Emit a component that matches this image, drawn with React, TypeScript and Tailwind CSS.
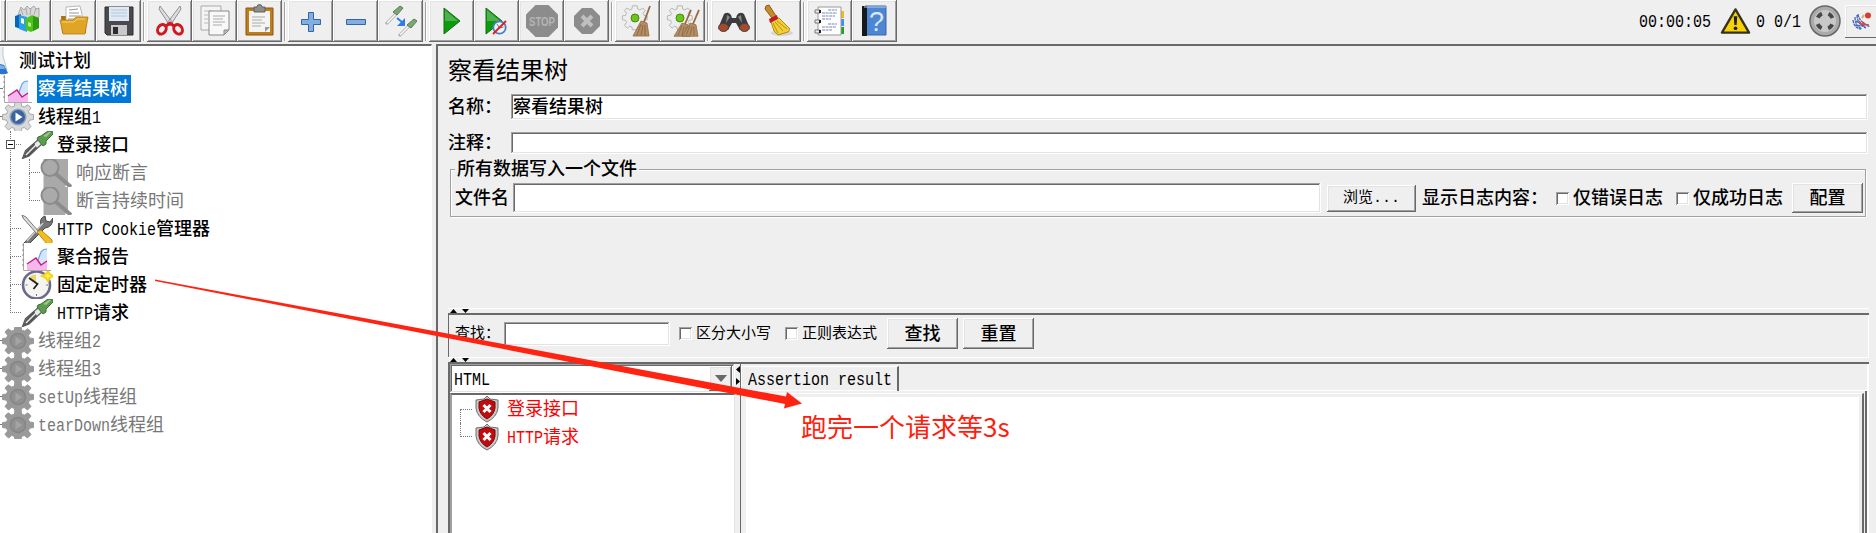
import React from "react";

const RAISED =
  "bg-[#efefef] shadow-[inset_-1px_-1px_0_#696969,inset_1px_1px_0_#fff,inset_-2px_-2px_0_#a0a0a0,inset_2px_2px_0_#e3e3e3]";
const SUNKEN =
  "bg-white shadow-[inset_-1px_-1px_0_#fff,inset_1px_1px_0_#a0a0a0,inset_-2px_-2px_0_#e3e3e3,inset_2px_2px_0_#696969]";

// Half-width characters take exactly half of a Chinese one
const Label: React.FC<{ text: string; className?: string }> = ({ text, className = "" }) => (
  <span className={`whitespace-pre text-[18px] leading-7 ${className}`}>
    {text.split(/([ -~]+)/).map((part, i) =>
      i % 2 ? (
        <span
          key={i}
          className="inline-block origin-[50%_78%] scale-y-[1.26] font-['Liberation_Mono',monospace] text-[15px] leading-4"
        >
          {part}
        </span>
      ) : (
        part
      )
    )}
  </span>
);

/* ---------- toolbar icons ---------- */

const Svg: React.FC<{ children: React.ReactNode }> = ({ children }) => (
  <svg viewBox="0 0 32 32" className="block size-8 shrink-0 overflow-visible">
    {children}
  </svg>
);

const Templates = () => (
  <Svg>
    <path d="M5 10 8 2l3 3 3-4 3 3 4-3 2 3 3-1v9L15 14z" fill="#d8d8d8" stroke="#999" strokeWidth=".8" />
    <path d="M8 4l2 6M13 3l1 7M18 3l-1 7M23 3l-2 7" stroke="#aaa" />
    <path d="M2 11l6-2v15l-6-2z" fill="#0a66b8" />
    <path d="M6 10l8 2v15l-8-3z" fill="#2ba0ea" />
    <path d="M8 13l3 1v5l-3-1z" fill="#fff" />
    <path d="M12 14l7-4 7 3v10l-8 4-5-2z" fill="#4fc21b" />
    <path d="M20 11l6 2v10l-6 3z" fill="#2d9a10" />
    <path d="M15 17l3 1v4l-3-1z" fill="#b5f08e" />
  </Svg>
);

const Open = () => (
  <Svg>
    <path d="M3 11h9l2 3h14v14H4z" fill="#a87212" />
    <path d="M8 2l14-1 4 17H8z" fill="#fff" stroke="#aaa" strokeWidth=".8" />
    <path d="M11 5l9-1M11 8h10M11 11h12M10 14h13" stroke="#999" />
    <path d="M2 15h13l3-3h12l-3 17H5z" fill="#e0a526" stroke="#b57b10" strokeWidth=".8" />
    <path d="M4 17h12l3-3h8" stroke="#f6d270" fill="none" />
  </Svg>
);

const Save = () => (
  <Svg>
    <path d="M2 2h28v28H4l-2-2z" fill="#4a4a4e" stroke="#2c2c30" />
    <path d="M6 2h20v14H6z" fill="#dfe9f3" />
    <path d="M8 5h16M8 8h16M8 11h16" stroke="#b4c8dc" />
    <path d="M8 20h16v10H8z" fill="#c8c8c8" />
    <path d="M10 22h5v7h-5z" fill="#2c2c30" />
  </Svg>
);

const Cut = () => (
  <Svg>
    <path d="M6 1l13 17-3 3L5 4zM26 1L13 18l3 3L27 4z" fill="#ddd" stroke="#888" strokeWidth=".9" />
    <ellipse cx="7.500" cy="24.500" rx="4" ry="5" transform="rotate(35 8 25)" fill="none" stroke="#d01820" strokeWidth="3" />
    <ellipse cx="24.500" cy="24.500" rx="4" ry="5" transform="rotate(-35 24 25)" fill="none" stroke="#d01820" strokeWidth="3" />
    <path d="M12 21l4-3 4 3" stroke="#d01820" strokeWidth="3" fill="none" />
  </Svg>
);

const Copy = () => (
  <Svg>
    <path d="M2 1h20v24H2z" fill="#f4f4f4" stroke="#aaa" />
    <path d="M5 6h8M5 10h4M5 14h4M5 18h4" stroke="#bbb" />
    <path d="M10 6h20v19l-5 5H10z" fill="#f8f8f8" stroke="#888" />
    <path d="M14 11h12M14 14h10M14 17h12M14 20h9" stroke="#aaa" />
    <path d="M30 25h-5v5z" fill="#bbb" stroke="#888" />
  </Svg>
);

const Paste = () => (
  <Svg>
    <path d="M2 3h27v27H2z" fill="#c07d1c" stroke="#8a5510" />
    <path d="M5 6h21v21H5z" fill="#f4f4f2" />
    <path d="M10 2h3a2 2 0 0 1 5 0h3v5H10z" fill="#8c8f89" stroke="#60635e" />
    <path d="M8 12h13M8 15h10M8 18h13M8 21h9" stroke="#aaa" />
    <path d="M26 22h-5v5z" fill="#999" />
  </Svg>
);

const Plus = () => (
  <Svg>
    <path d="M13.500 7.500h5v7h7v5h-7v7h-5v-7h-7v-5h7z" fill="#83aee0" stroke="#3465a4" />
  </Svg>
);

const Minus = () => (
  <Svg>
    <path d="M6.500 14.500h19v5h-19z" fill="#83aee0" stroke="#3465a4" />
  </Svg>
);

const Toggle = () => (
  <Svg>
    <path d="M1 19l10-10" stroke="#aaa" strokeWidth="3" />
    <path d="M2 18l9-9" stroke="#fff" strokeWidth="1.500" />
    <path d="M8 7l7-6 3 2-6 7z" fill="#7ba774" stroke="#567f4f" />
    <path d="M12 13l6 5" stroke="#2f7ee8" strokeWidth="2" />
    <path d="M20 13v8h-8z" fill="#2f7ee8" />
    <path d="M14 31l10-10" stroke="#aaa" strokeWidth="3" />
    <path d="M15 30l9-9" stroke="#fff" strokeWidth="1.500" />
    <path d="M22 20l7-6 3 2-6 7z" fill="#7ba774" stroke="#567f4f" />
  </Svg>
);

const Play = () => (
  <Svg>
    <path d="M8 3l16 13L8 29z" fill="#0a9d0a" stroke="#176b17" />
    <path d="M9 5l13 11H9z" fill="#4eb04e" />
  </Svg>
);

const PlayNoTimers = () => (
  <Svg>
    <path d="M5 3l16 13L5 29z" fill="#0a9d0a" stroke="#176b17" />
    <path d="M6 5l13 11H6z" fill="#4eb04e" />
    <circle cx="18.500" cy="22.500" r="6.200" fill="#eef4fb" stroke="#4a7fc0" strokeWidth="1.800" />
    <path d="M16 19l2.500 4 4-1" stroke="#777" fill="none" />
    <path d="M12 29L25 16" stroke="#e01b24" strokeWidth="1.800" />
  </Svg>
);

const Stop = () => (
  <Svg>
    <path d="M9.500 0h13L32 9.500v13L22.500 32h-13L0 22.500v-13z" fill="#8c8c8c" />
    <text x="16" y="20.500" textAnchor="middle" fontSize="12" fontWeight="bold" textLength="26" lengthAdjust="spacingAndGlyphs" fill="#b5b5b5" fontFamily="Liberation Sans">
      STOP
    </text>
  </Svg>
);

const Shutdown = () => (
  <Svg>
    <path d="M11 3h10l8 8v10l-8 8H11l-8-8V11z" fill="#8c8c8c" />
    <path d="M11 11l10 10M21 11L11 21" stroke="#bfbfbf" strokeWidth="4" />
  </Svg>
);

const GearShape: React.FC<{ fill: string; stroke: string }> = ({ fill, stroke }) => (
  <path
    d="M13 1h6l.6 4 2.700 1.100L26 3.800 29 7l-2.600 3.300 1.100 2.700 4 .5v5l-4 .7-1.100 2.700L29 25.500 25.500 29l-3.300-2.600-2.700 1.100L19 31h-6l-.6-3.500-2.700-1.100L6.500 29 3 25.500l2.600-3.600-1.100-2.700-4-.7v-5l4-.5 1.100-2.700L3 7l3-3.200 3.700 2.300L12.400 5z"
    fill={fill}
    stroke={stroke}
  />
);

const Broom: React.FC<{ x: number }> = ({ x }) => (
  <g transform={`translate(${x} 0)`}>
    <path d="M17 1l-6 16" stroke="#9a6a42" strokeWidth="1.800" />
    <path d="M8 16l6 2 2 13H0z" fill="#b58e66" stroke="#8d6843" strokeWidth=".8" />
    <path d="M8 19L4 30M10 20L8 30M12 20v10" stroke="#7c5836" strokeWidth=".7" />
  </g>
);

const Clear = () => (
  <Svg>
    <g transform="scale(.8)">
      <GearShape fill="#eee" stroke="#aaa" />
    </g>
    <circle cx="13" cy="13" r="4" fill="#6cc518" stroke="#468a12" />
    <Broom x={11} />
  </Svg>
);

const ClearAll = () => (
  <Svg>
    <g transform="scale(.8)">
      <GearShape fill="#eee" stroke="#aaa" />
    </g>
    <circle cx="13" cy="13" r="4" fill="#6cc518" stroke="#468a12" />
    <g transform="translate(0 4) scale(1 .88)">
      <Broom x={7} />
      <Broom x={15} />
    </g>
  </Svg>
);

const Search = () => (
  <Svg>
    <path d="M6 9q4-3 7 1l1 3h4l1-3q3-4 7-1l5 12-2 4h-7l-4-7h-4l-4 7H3l-2-4z" fill="#3c3c3e" />
    <path d="M9 10l3 2-4 6zM23 10l-3 2 4 6z" fill="#888" />
    <ellipse cx="5.500" cy="22.500" rx="5" ry="4" fill="#a8492a" stroke="#444" />
    <ellipse cx="26.500" cy="22.500" rx="5" ry="4" fill="#a8492a" stroke="#444" />
  </Svg>
);

const Sweep = () => (
  <Svg>
    <ellipse cx="19" cy="28" rx="11" ry="3" fill="#d4d4d4" />
    <path d="M3 1l3-1 7 11-4 2L2 4z" fill="#c98a2c" stroke="#8b5a14" />
    <path d="M12 13h4l11 11-2 3-10 3-4-4-3-9z" fill="#f2cf3a" stroke="#b08c10" />
    <path d="M10 18l5 10M12 17l8 9M14 16l10 8" stroke="#b8900f" />
    <path d="M6 14l8-4 1 4-8 4z" fill="#c21a22" />
  </Svg>
);

const FunctionHelper = () => (
  <Svg>
    <path d="M24 6h6v7h-6z" fill="#f4b81c" />
    <path d="M24 14h6v7h-6z" fill="#3f8ef0" />
    <path d="M24 22h6v7h-6z" fill="#22a022" />
    <path d="M4 2h23v28H4z" fill="#fff" stroke="#999" />
    <path d="M14 5h9M8 8h15M8 11h13M8 14h9M14 19h9M8 22h14M8 25h10" stroke="#7c86b8" strokeWidth="1.200" strokeDasharray="3 .6" />
    <path d="M1 5h5v3H1zM1 15h5v3H1zM1 25h5v3H1z" fill="#eee" stroke="#777" />
    <path d="M5 5h2v3H5zM5 15h2v3H5zM5 25h2v3H5z" fill="#222" />
  </Svg>
);

const Help = () => (
  <Svg>
    <path d="M6 1h21v29H6z" fill="#4d86d2" stroke="#3a66a6" />
    <path d="M3 1h5v30H3z" fill="#16181c" />
    <path d="M5 2h22" stroke="#bcd0ea" />
    <text x="17.500" y="26" textAnchor="middle" fontSize="27" fill="#dbe7f8" fontFamily="Liberation Sans">
      ?
    </text>
  </Svg>
);

/* ---------- tree icons ---------- */

// Tree icons are 32px high and get clipped by the 28px rows
const RowSvg: React.FC<{ children: React.ReactNode }> = ({ children }) => (
  <svg viewBox="0 0 32 32" preserveAspectRatio="xMidYMid slice" className="block h-7 w-8 shrink-0">
    {children}
  </svg>
);

const TestPlanIcon = () => (
  <svg viewBox="0 0 10 28" className="block h-7 w-2.5 shrink-0">
    <path d="M0 0h3v9l5 18H0z" fill="#eceff2" />
    <path d="M3 0v9l4 14" stroke="#c3c7cb" fill="none" />
    <path d="M0 17l4 1 4 8q-3 2-8 1z" fill="#2a74cc" />
    <path d="M0 18l4 1 1 3H0z" fill="#7db0ea" />
  </svg>
);

const ChartIcon = () => (
  <RowSvg>
    <path d="M2.500 2v27.500H30" stroke="#aaa" fill="none" />
    <path d="M3 4H1M3 9H1M3 14H1M3 19H1M3 24H1" stroke="#888" />
    <path d="M6 23l9-7 5 8 6-4v9H6z" fill="#f7b7ee" />
    <path d="M17 19l3-8 6-3v12l-6 4z" fill="#d5e5fb" />
    <path d="M17 19l3-8q2-3 6-3" stroke="#6b9ff0" strokeWidth="1.200" fill="none" />
    <path d="M6 23l9-6 5 7 6-4" stroke="#c0207c" strokeWidth="1.300" fill="none" />
  </RowSvg>
);

const GroupIcon = () => (
  <RowSvg>
    <GearShape fill="#d9d9d9" stroke="#a9a9a9" />
    <circle cx="16" cy="16" r="7.800" fill="#3c649c" stroke="#8fa3bf" strokeWidth="1.500" />
    <path d="M13.500 11.500l7 4.500-7 4.500z" fill="#fff" />
  </RowSvg>
);

const DisabledGroupIcon = () => (
  <RowSvg>
    <path d="M13 0h6v32h-6z" fill="#999" />
    <GearShape fill="#999" stroke="#999" />
    <circle cx="16" cy="16" r="7.500" fill="#919191" stroke="#858585" strokeWidth="1.500" />
    <path d="M13.500 11.500l7 4.500-7 4.500z" fill="#a4a4a4" />
  </RowSvg>
);

const SamplerIcon = () => (
  <RowSvg>
    <path d="M1.500 29.500l3-8L18 10l4 4L8 27z" fill="#e8e8e8" stroke="#555" strokeWidth="1.200" />
    <path d="M2 29l3-7 8-8 3 5-8 8z" fill="#555" />
    <path d="M5 26l11-11" stroke="#eee" strokeWidth="1.500" />
    <path d="M17 8l3-1 7-5h4l1 3-7 7v3l-3 2-6-7z" fill="#5c9b50" stroke="#3d7033" />
    <path d="M22 7l6-4h2l-5 5z" fill="#9cc98f" />
  </RowSvg>
);

const AssertionIcon = () => (
  <RowSvg>
    <path d="M3.500 0H28v24l-4 8H3.500z" fill="#a9a9a9" />
    <circle cx="10" cy="10.500" r="8.500" fill="#aaa" stroke="#8b8b8b" strokeWidth="2" />
    <path d="M16 17l15 13" stroke="#8c8c8c" strokeWidth="4" />
  </RowSvg>
);

const ConfigIcon = () => (
  <RowSvg>
    <path d="M3 30l17-18q-2-7 4-9l1 5 4 1 3-4q0 9-8 10L8 31z" fill="#777" stroke="#484848" />
    <path d="M22 10L6 28" stroke="#ccc" strokeWidth="1.500" />
    <path d="M1 2l4 2 13 15-2 2L2 5z" fill="#ddd" stroke="#777" />
    <path d="M16 19l4-2 11 10v4h-5z" fill="#f3bd20" stroke="#bd8c0c" />
  </RowSvg>
);

const TimerIcon = () => (
  <RowSvg>
    <circle cx="15.500" cy="16" r="13.500" fill="#f4f4f0" stroke="#6c6a8c" strokeWidth="2.600" />
    <path d="M15 15V5.500q-4 0-7 3z" fill="#ecd36a" />
    <path d="M8 9l8.500 6-4 5" stroke="#222" strokeWidth="1.800" fill="none" />
    <path d="M15.500 25v2M25 16h2M4.500 16h2" stroke="#777" />
    <path d="M27 2l1.500 3L32 7l-3.500 2L27 12l-2-3-4-2 4-2z" fill="#fff04a" stroke="#f3d31c" strokeWidth="2" />
  </RowSvg>
);

const ErrorShield = () => (
  <svg viewBox="0 0 24 28" className="block h-7 w-6 shrink-0">
    <path d="M12 1l3 3 8 1v8q-1 9-11 14Q2 22 1 13V5l8-1z" fill="#c9c9c9" stroke="#6f6f6f" />
    <path d="M12 4l8 3v6q-1 7-8 11-7-4-8-11V7z" fill="#c00c0c" stroke="#7c0808" />
    <path d="M8.500 10l7 7M15.500 10l-7 7" stroke="#fff" strokeWidth="3" />
  </svg>
);

const toolbar: React.FC[][] = [
  [Templates, Open, Save],
  [Cut, Copy, Paste],
  [Plus, Minus, Toggle],
  [Play, PlayNoTimers, Stop, Shutdown],
  [Clear, ClearAll],
  [Search, Sweep],
  [FunctionHelper, Help],
];

const Toolbar = () => (
  <div className="flex h-11 shrink-0 items-start">
    <div className={`h-[42px] w-1.5 ${RAISED}`} />
    {toolbar.map((group, g) => (
      <React.Fragment key={g}>
        {g > 0 && <div className="mt-0.5 ml-0.5 h-[39px] w-1 border-l border-[#a0a0a0] shadow-[inset_1px_0_0_#fff]" />}
        {group.map((Icon, i) => (
          <button key={i} className={`flex h-[42px] w-[45px] items-center justify-center ${RAISED}`}>
            <Icon />
          </button>
        ))}
      </React.Fragment>
    ))}
    <div className="ml-auto flex h-[42px] items-center">
      <Label text="00:00:05" />
      <svg viewBox="0 0 32 28" className="ml-[9px] block h-7 w-[31px]">
        <path d="M16 2l14 24H2z" fill="#f9d108" stroke="#35321c" strokeWidth="2.400" strokeLinejoin="round" />
        <path d="M14.200 9h3.600l-.6 9h-2.400z" fill="#222" />
        <circle cx="16" cy="21.500" r="1.900" fill="#222" />
      </svg>
      <Label text="0" className="ml-[5px]" />
      <Label text="0/1" className="ml-[9px]" />
      <span className="ml-2">
        <Svg>
          <circle cx="16" cy="16" r="15" fill="#aaa" stroke="#666" strokeWidth="1.500" />
          <circle cx="16" cy="16" r="11" fill="#c8c8c8" />
          <circle cx="16" cy="16" r="8" fill="none" stroke="#484848" strokeWidth="4" strokeDasharray="5.800 6.766" strokeDashoffset="-3.400" />
        </Svg>
      </span>
      <button className="ml-1 flex h-[33px] w-[31px] items-center overflow-hidden bg-[#efefef] pl-[7px] shadow-[inset_0_-1px_0_#696969,inset_1px_1px_0_#fff,inset_2px_2px_0_#e3e3e3]">
        <svg viewBox="0 0 20 18" className="block h-[18px] w-5">
          <path d="M1 8q1 8 8 9M3 5q0 9 7 12M5 3q0 9 9 13M2 13l8 1M4 9l10 6M6 2q1 8 12 13" stroke="#4267b8" strokeWidth="1.300" fill="none" strokeDasharray="3 .7" />
          <path d="M7 9l3 4 2-3M11 12l6 1" stroke="#d94545" strokeWidth="1.500" fill="none" />
          <path d="M10 6l2-3" stroke="#e2a36c" strokeWidth="2" />
          <circle cx="16" cy="3.500" r="3" fill="#d83a34" />
        </svg>
      </button>
    </div>
  </div>
);

/* ---------- test plan tree ---------- */

interface Node {
  text: string;
  depth: number;
  icon: React.FC;
  disabled?: boolean;
  selected?: boolean;
  expanded?: boolean;
  last?: boolean;
}

const nodes: Node[] = [
  { text: "测试计划", depth: 0, icon: TestPlanIcon },
  { text: "察看结果树", depth: 1, icon: ChartIcon, selected: true },
  { text: "线程组1", depth: 1, icon: GroupIcon },
  { text: "登录接口", depth: 2, icon: SamplerIcon, expanded: true },
  { text: "响应断言", depth: 3, icon: AssertionIcon, disabled: true },
  { text: "断言持续时间", depth: 3, icon: AssertionIcon, disabled: true, last: true },
  { text: "HTTP Cookie管理器", depth: 2, icon: ConfigIcon },
  { text: "聚合报告", depth: 2, icon: ChartIcon },
  { text: "固定定时器", depth: 2, icon: TimerIcon },
  { text: "HTTP请求", depth: 2, icon: SamplerIcon, last: true },
  { text: "线程组2", depth: 1, icon: DisabledGroupIcon, disabled: true },
  { text: "线程组3", depth: 1, icon: DisabledGroupIcon, disabled: true },
  { text: "setUp线程组", depth: 1, icon: DisabledGroupIcon, disabled: true },
  { text: "tearDown线程组", depth: 1, icon: DisabledGroupIcon, disabled: true },
];

// Dotted elbow in front of a node
const Guide: React.FC<{ className: string; last?: boolean }> = ({ className, last }) => (
  <span className={`flex shrink-0 flex-col ${className}`}>
    <span className="h-3.5 border-b border-l border-dotted border-[#777]" />
    {!last && <span className="h-3.5 border-l border-dotted border-[#777]" />}
  </span>
);

const TreeRow: React.FC<{ node: Node }> = ({ node }) => {
  const Icon = node.icon;
  return (
    <div className={`relative flex h-7 ${node.disabled ? "text-[#777]" : "font-medium text-black"}`}>
      {node.depth === 1 && <span className="h-3.5 w-0.5 border-b border-dotted border-[#777]" />}
      {node.depth === 2 && <Guide className="w-[21px] pl-2.5" last={node.last} />}
      {node.depth === 3 && (
        <>
          <span className="ml-2.5 w-[11px] border-l border-dotted border-[#777]" />
          <Guide className="w-[19px] pl-2" last={node.last} />
        </>
      )}
      {node.expanded && (
        <span className="absolute top-[9px] left-1.5 flex size-[9px] items-center justify-center border border-[#555] bg-white">
          <span className="h-px w-[5px] bg-black" />
        </span>
      )}
      <Icon />
      <Label
        text={node.text}
        className={
          node.selected ? "ml-[3px] bg-[#0078d7] pr-[3px] pl-px text-white" : node.depth === 0 ? "ml-[9px]" : "ml-1"
        }
      />
    </div>
  );
};

/* ---------- listener panel ---------- */

const Checkbox = () => (
  <span className="size-[13px] shrink-0 bg-white shadow-[inset_1px_1px_0_#a0a0a0,inset_-1px_-1px_0_#fff,inset_2px_2px_0_#696969,inset_-2px_-2px_0_#e3e3e3]" />
);

const Field: React.FC<{ label: string; value?: string; className: string }> = ({ label, value = "", className }) => (
  <div className={`flex items-center pr-px ${className}`}>
    <Label text={label} className="w-[63px]" />
    <div className={`flex h-full flex-1 items-center pl-0.5 ${SUNKEN}`}>
      <Label text={value} />
    </div>
  </div>
);

const SplitArrows = () => (
  <div className="flex h-[5px] items-end gap-[5px] border-t border-white pl-0.5">
    <svg viewBox="0 0 7 4" className="block h-1 w-[7px]">
      <path d="M3.500 0L7 4H0z" />
    </svg>
    <svg viewBox="0 0 7 4" className="block h-1 w-[7px]">
      <path d="M0 0h7L3.500 4z" />
    </svg>
  </div>
);

const SearchBar = () => (
  <div className="flex h-11 border-t-2 border-l border-[#696969] shadow-[inset_-1px_0_0_#fff]">
    <div className="flex h-[37px] items-center pl-1.5 text-[15px]">
      <span className="w-[49px]">查找：</span>
      <span className={`h-6 w-[166px] ${SUNKEN}`} />
      <span className="ml-[9px] flex items-center gap-1">
        <Checkbox />
        区分大小写
      </span>
      <span className="ml-3.5 flex items-center gap-1">
        <Checkbox />
        正则表达式
      </span>
      <button className={`ml-2.5 h-[31px] w-[71px] font-medium ${RAISED}`}>
        <Label text="查找" />
      </button>
      <button className={`ml-[5px] h-[31px] w-[71px] font-medium ${RAISED}`}>
        <Label text="重置" />
      </button>
    </div>
  </div>
);

const Results = () => (
  <div className="flex min-h-0 flex-1 border-t-2 border-l-2 border-[#696969]">
    <div className="flex w-[285px] flex-col">
      <div className={`flex h-[29px] items-center justify-between pr-[3px] pl-1 ${SUNKEN}`}>
        <Label text="HTML" />
        <span className={`flex h-[25px] w-[23px] items-center justify-center ${RAISED}`}>
          <svg viewBox="0 0 14 8" className="block h-[7px] w-3.5">
            <path d="M0 0h14L7 8z" fill="#696969" />
          </svg>
        </span>
      </div>
      <div className="flex-1 border-t-2 border-r border-l-2 border-t-[#696969] border-r-[#e3e3e3] border-l-[#a0a0a0] bg-white pl-2 text-[#f00]">
        {["登录接口", "HTTP请求"].map((text, i) => (
          <div key={text} className="flex h-7">
            <span className="flex w-[15px] flex-col">
              {i === 0 && <span className="mt-3.5 h-3.5 w-3 border-t border-l border-dotted border-[#777]" />}
              {i === 1 && <span className="h-3.5 w-3 border-b border-l border-dotted border-[#777]" />}
            </span>
            <ErrorShield />
            <Label text={text} className="ml-2" />
          </div>
        ))}
      </div>
    </div>
    <div className="flex w-[5px] shrink-0 flex-col gap-[5px] pt-0.5">
      <svg viewBox="0 0 4 7" className="ml-px block h-[7px] w-1">
        <path d="M4 0v7L0 3.500z" />
      </svg>
      <svg viewBox="0 0 4 7" className="ml-px block h-[7px] w-1">
        <path d="M0 0v7l4-3.500z" />
      </svg>
    </div>
    <div className="flex flex-1 flex-col border-r-2 border-l border-r-white border-l-[#696969]">
      <div className="flex h-[27px] border-b border-white pt-0.5">
        <div className="flex h-[25px] w-[158px] items-center border-t border-r-2 border-l border-t-white border-r-[#696969] border-l-white pl-1.5">
          <Label text="Assertion result" />
        </div>
      </div>
      <div className="flex flex-1 border-r-2 border-[#696969] pt-0.5">
        <div className="mr-px flex flex-1 border-t border-r-2 border-t-white border-r-[#696969] pt-[3px] pr-[3px] pl-[5px]">
          <div className="flex-1 bg-white" />
        </div>
      </div>
    </div>
  </div>
);

const ResultsTreePanel = () => (
  <div className="flex flex-1 flex-col border-t-2 border-l-2 border-[#696969] pr-[7px] pl-2.5">
    <h1 className="mt-2 h-8 text-[24px] leading-[34px]">察看结果树</h1>
    <Field label="名称：" value="察看结果树" className="mt-2 h-[26px] font-medium" />
    <Field label="注释：" className="mt-3 h-[22px] font-medium" />

    <div className="relative mt-[15px] mr-[3px] ml-0.5 flex h-12 items-end border border-[#a0a0a0] pb-[3px] pl-1 font-medium shadow-[inset_1px_1px_0_#fff,1px_1px_0_#fff]">
      <Label text="所有数据写入一个文件" className="absolute -top-3.5 left-1 bg-[#efefef] px-0.5 leading-[26px]" />
      <div className="flex h-[30px] flex-1 items-center">
        <Label text="文件名" className="w-[58px]" />
        <span className={`h-[30px] w-[808px] ${SUNKEN}`} />
        <button className={`ml-1.5 h-[27px] w-[89px] text-[15px] font-normal ${RAISED}`}>
          浏览<span className="font-['Liberation_Mono',monospace]">...</span>
        </button>
        <Label text="显示日志内容：" className="ml-1.5 w-[134px]" />
        <Checkbox />
        <Label text="仅错误日志" className="ml-1" />
        <span className="w-[13px]" />
        <Checkbox />
        <Label text="仅成功日志" className="ml-1" />
        <button className={`mr-0.5 ml-auto h-[30px] w-[71px] ${RAISED}`}>
          <Label text="配置" />
        </button>
      </div>
    </div>

    <div className="mt-[91px]">
      <SplitArrows />
      <SearchBar />
    </div>
    <div className="flex flex-1 flex-col">
      <SplitArrows />
      <Results />
    </div>
  </div>
);

const App: React.FC = () => {
  return (
    <div className="relative flex h-[533px] w-[1876px] flex-col overflow-hidden bg-[#efefef] font-['Liberation_Sans','Noto_Sans_CJK_SC',sans-serif] text-black">
      <Toolbar />
      <div className="flex min-h-0 flex-1">
        <div className="w-[432px] border-t-2 border-r border-t-[#696969] border-r-white bg-white pt-px">
          {nodes.map((node) => (
            <TreeRow key={node.text} node={node} />
          ))}
        </div>
        <div className="w-1 bg-[#efefef]" />
        <ResultsTreePanel />
      </div>

      {/* Annotation over the window */}
      <svg viewBox="0 0 1876 533" className="pointer-events-none absolute inset-0 h-[533px] w-[1876px]">
        <path d="M155 279.500L430 330.300 786 396.500 787 392 802 403.500 784 408.500 785 404 430 334.700 155 281z" fill="#ff2312" />
      </svg>
      <span className="absolute top-[406px] left-[801px] font-['Noto_Sans_CJK_SC',sans-serif] text-[26px] leading-10 whitespace-nowrap text-[#ff1d0d]">
        跑完一个请求等3s
      </span>
    </div>
  );
};

export default App;
